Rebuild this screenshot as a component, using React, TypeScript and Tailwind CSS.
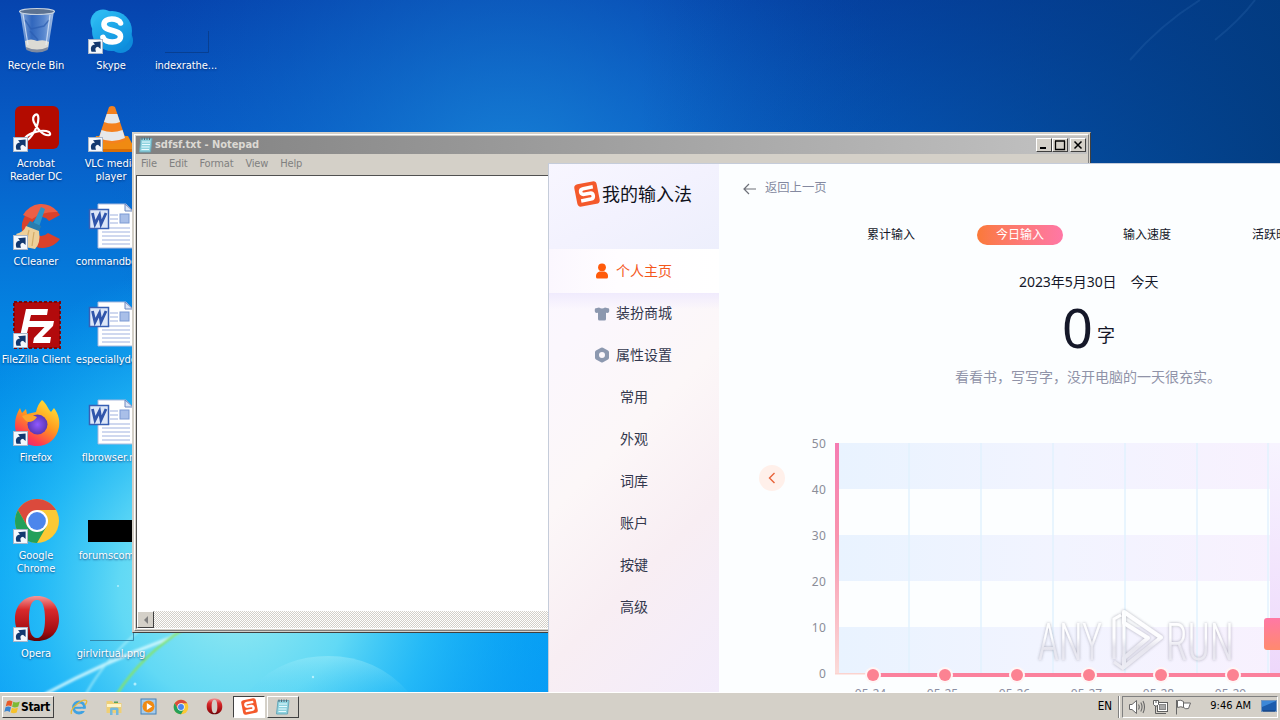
import React from "react";

type IconProps = { className?: string };

const ShortcutArrow = () => (
  <g transform="translate(0 32)">
    <rect x="0.5" y="0.5" width="14" height="14" fill="#f4f8fd" stroke="#a9b6c9" />
    <path d="M3.500 12.800C2 8.500 3.400 6 7 5.600L5 3.200 12.600 2.600 12.600 10 10 7.800C7.400 8.200 6.800 10 8 12.800Z" fill="#12386f" />
  </g>
);

const RecycleBin = () => (
  <svg width="48" height="48" viewBox="0 0 48 48">
    <defs>
      <linearGradient id="bin" x1="0" x2="1">
        <stop offset="0" stopColor="#c9dcf2" stopOpacity=".75" />
        <stop offset=".35" stopColor="#5d86c8" stopOpacity=".5" />
        <stop offset=".7" stopColor="#8fb0e0" stopOpacity=".6" />
        <stop offset="1" stopColor="#d5e4f5" stopOpacity=".8" />
      </linearGradient>
    </defs>
    <path d="M7 4 13 42Q24 48 35 42L41 4Z" fill="url(#bin)" />
    <path d="M12 34Q18 31 24 34 31 32 36 35L35 41Q24 46 13 41Z" fill="#dcdbd4" />
    <path d="M13 40Q24 45 35 40L34.500 43Q24 48 13.500 43Z" fill="#7f8ba0" />
    <path d="M12 13 18 22 31 19 36 13M17 24 25 33" stroke="#2b5cb0" strokeWidth="1.500" fill="none" opacity=".7" />
    <path d="M10 7 15 38M37 8 33 38" stroke="#eaf3ff" strokeWidth="1.200" opacity=".7" />
    <ellipse cx="24" cy="4.500" rx="17.500" ry="3" fill="#5c7291" stroke="#c6d2e0" strokeWidth="1.200" />
  </svg>
);

const Skype = () => (
  <svg width="48" height="48" viewBox="0 0 48 48">
    <defs>
      <linearGradient id="sky" x1="0" y1="0" x2=".6" y2="1">
        <stop offset="0" stopColor="#2fc0f5" />
        <stop offset="1" stopColor="#0e90de" />
      </linearGradient>
    </defs>
    <circle cx="15" cy="15" r="12.500" fill="#2cb9f1" />
    <circle cx="32.500" cy="33.500" r="12.500" fill="#0e8cdb" />
    <circle cx="24" cy="24" r="20" fill="url(#sky)" />
    <path d="M32.500 16C31 11 16 10 16 17.500 16 25 32.500 22 32.500 29.500 32.500 37 17 36.500 15 30.500" fill="none" stroke="#fff" strokeWidth="5.600" strokeLinecap="round" />
    <ShortcutArrow />
  </svg>
);

const Acrobat = () => (
  <svg width="48" height="48" viewBox="0 0 48 48">
    <rect x="2" y="1" width="44" height="43" rx="6" fill="#b30b00" />
    <path d="M22 10C26 7 27.500 16 20.500 28 15 37 9 38 12 33 17 27 30 24 36 27 40 31 33 32 27 26 21 20 18 13 22 10Z" fill="none" stroke="#fff" strokeWidth="2.200" />
    <ShortcutArrow />
  </svg>
);

const Vlc = () => (
  <svg width="48" height="48" viewBox="0 0 48 48">
    <path d="M8 31H40L48 46H2Z" fill="#f08a12" />
    <path d="M2 44H48V47H2Z" fill="#d96e05" />
    <path d="M21 2Q24 0 27 2L38 35Q24 42 10 35Z" fill="#f4811e" />
    <path d="M18.700 9H29.300L32 17Q24 20 16 17Z" fill="#e6e8ea" />
    <path d="M13.500 25Q24 29 34.500 25L37 33Q24 39 11 33Z" fill="#e6e8ea" />
    <ShortcutArrow />
  </svg>
);

const CCleaner = () => (
  <svg width="48" height="48" viewBox="0 0 48 48">
    <path d="M47 12A21 21 0 1 0 47 36L35 30A9.500 9.500 0 1 1 36 18Z" fill="#d9412b" />
    <path d="M45 9A21 21 0 0 0 10 12L19 16Q30 8 45 9Z" fill="#ec5f45" />
    <path d="M28 4 32 6 26 24 20 21Z" fill="#2f94c8" />
    <path d="M17 18 28 23 26 29 13 24Z" fill="#2a7cae" />
    <path d="M13 23 26 28Q28 40 22 46L12 44 3 31Q11 29 13 23Z" fill="#eed09a" />
    <path d="M16 27 13 40M21 29 19 43" stroke="#d3ab68" strokeWidth="1.200" />
    <ShortcutArrow />
  </svg>
);

const FileZilla = () => (
  <svg width="48" height="48" viewBox="0 0 48 48">
    <rect x="1" y="1" width="46" height="46" fill="#b20a0c" stroke="#7d0507" strokeWidth="2" strokeDasharray="3 2" />
    <path d="M13 8H35L34 14H18L16.500 20H27L26 26H15.500L12 40H6Z" fill="#fff" />
    <path d="M24 20H41L40 25 29 36H38L37 42H20L21 37 31.500 26H23Z" fill="#fff" />
    <ShortcutArrow />
  </svg>
);

const Firefox = () => (
  <svg width="48" height="48" viewBox="0 0 48 48">
    <defs>
      <linearGradient id="fox" x1=".8" y1="0" x2=".2" y2="1">
        <stop offset="0" stopColor="#ffe63a" />
        <stop offset=".45" stopColor="#ff9a1f" />
        <stop offset=".8" stopColor="#ff3d4f" />
        <stop offset="1" stopColor="#e5247f" />
      </linearGradient>
      <radialGradient id="foxCore">
        <stop offset="0" stopColor="#9059ff" />
        <stop offset="1" stopColor="#5b37b4" />
      </radialGradient>
    </defs>
    <path d="M29 1C34 5 35 10 38 13L41 9C46 16 47 22 46 28 44 40 35 47 24 47 11 47 2 38 2 26 2 19 4 14 7 9L9 14 13 10 14 15 23 13C24 8 26 4 29 1Z" fill="url(#fox)" />
    <circle cx="24.500" cy="25.500" r="10" fill="url(#foxCore)" />
    <path d="M9 17Q17 14 24 18 21 23 15 23 12 22 9 17Z" fill="#ffa52a" />
    <ShortcutArrow />
  </svg>
);

const ChromeMark = ({ size }: { size: number }) => (
  <svg width={size} height={size} viewBox="0 0 48 48">
    <circle cx="24" cy="24" r="22" fill="#fbc935" />
    <path d="M24 24 14.500 29.500 4.950 13A22 22 0 0 1 43.050 13H24Z" fill="#db4a3c" />
    <path d="M4.950 13A22 22 0 0 0 24 46L33.500 29.500 24 24 14.500 29.500Z" fill="#23a05a" />
    <circle cx="24" cy="24" r="11" fill="#fff" />
    <circle cx="24" cy="24" r="8.900" fill="#4c86ec" />
    {size > 20 && <ShortcutArrow />}
  </svg>
);

const OperaMark = ({ size }: { size: number }) => (
  <svg width={size} height={size} viewBox="0 0 48 48">
    <defs>
      <linearGradient id="opera" x1="0" y1="0" x2="0" y2="1">
        <stop offset="0" stopColor="#f3999a" />
        <stop offset=".3" stopColor="#d92a2c" />
        <stop offset=".8" stopColor="#a00c10" />
        <stop offset="1" stopColor="#5f0306" />
      </linearGradient>
    </defs>
    <path fillRule="evenodd" d="M24 1C38 1 46 11 46 24S38 46 24 46 2 37 2 24 10 1 24 1ZM24 5C18 5 16 13 16 24S18 43 24 43 32 35 32 24 30 5 24 5Z" fill="url(#opera)" />
    {size > 20 && <ShortcutArrow />}
  </svg>
);

const WordDoc = () => (
  <svg width="48" height="48" viewBox="0 0 48 48">
    <path d="M10 1H38L45 8V45H10Z" fill="#fff" stroke="#a9b9dd" />
    <path d="M37 1V8H45Z" fill="#dbe5f7" stroke="#6f88bd" />
    <path d="M22 12H30M22 16H30M22 20H30M14 25H42M14 29H42M14 33H42M14 37H42M14 41H42" stroke="#9fb2e0" strokeWidth="1.200" />
    <rect x="32" y="11" width="9" height="9" fill="#a9bfe8" stroke="#7d9ad3" />
    <rect x="1.500" y="6.500" width="19" height="19" fill="#dde7f8" stroke="#3860b4" strokeWidth="1.500" />
    <path d="M4.500 10 7 21 11.500 12 13 21 18 10" fill="none" stroke="#2f55ab" strokeWidth="2.800" />
  </svg>
);

const BlackImage = () => (
  <svg width="48" height="48" viewBox="0 0 48 48">
    <rect x="0" y="23" width="48" height="22" fill="#000" />
  </svg>
);

const EmptyImage = ({ light = false }: { light?: boolean }) => (
  <svg width="48" height="48" viewBox="0 0 48 48">
    <path d={light ? "M2 45.500H45.500V33" : "M2 45.500H45.500V24"} fill="none" stroke={light ? "#2e7797" : "#083b88"} strokeWidth="1" opacity=".8" />
  </svg>
);

type Shortcut = { icon: React.ReactNode; label: string };

const columns: Shortcut[][] = [
  [
    { icon: <RecycleBin />, label: "Recycle Bin" },
    { icon: <Acrobat />, label: "Acrobat\nReader DC" },
    { icon: <CCleaner />, label: "CCleaner" },
    { icon: <FileZilla />, label: "FileZilla Client" },
    { icon: <Firefox />, label: "Firefox" },
    { icon: <ChromeMark size={48} />, label: "Google\nChrome" },
    { icon: <OperaMark size={48} />, label: "Opera" },
  ],
  [
    { icon: <Skype />, label: "Skype" },
    { icon: <Vlc />, label: "VLC media\nplayer" },
    { icon: <WordDoc />, label: "commandbo..." },
    { icon: <WordDoc />, label: "especiallyde..." },
    { icon: <WordDoc />, label: "flbrowser.rtf" },
    { icon: <BlackImage />, label: "forumscom..." },
    { icon: <EmptyImage light />, label: "girlvirtual.png" },
  ],
  [{ icon: <EmptyImage />, label: "indexrathe..." }],
];

const Wallpaper = () => (
  <svg className="absolute inset-0" width="1280" height="720" viewBox="0 0 1280 720">
    <defs>
      <linearGradient id="base" x1="0" y1="0" x2="0" y2="1">
        <stop offset="0" stopColor="#0644ae" />
        <stop offset=".2" stopColor="#075ec8" />
        <stop offset=".45" stopColor="#0484e2" />
        <stop offset=".75" stopColor="#01a0f2" />
        <stop offset="1" stopColor="#0a9cf6" />
      </linearGradient>
      <radialGradient id="glow" gradientUnits="userSpaceOnUse" cx="235" cy="590" r="330">
        <stop offset="0" stopColor="#9aebf0" />
        <stop offset=".35" stopColor="#66dcf5" stopOpacity=".95" />
        <stop offset=".6" stopColor="#2fc4f8" stopOpacity=".7" />
        <stop offset="1" stopColor="#10a8f4" stopOpacity="0" />
      </radialGradient>
      <radialGradient id="haze" gradientUnits="userSpaceOnUse" cx="510" cy="190" r="400">
        <stop offset="0" stopColor="#1a86d8" stopOpacity=".9" />
        <stop offset="1" stopColor="#0b5cc0" stopOpacity="0" />
      </radialGradient>
      <linearGradient id="shade" x1="0" y1="0" x2="1" y2="0">
        <stop offset=".5" stopColor="#023a7c" stopOpacity="0" />
        <stop offset="1" stopColor="#023a7c" stopOpacity=".9" />
      </linearGradient>
      <linearGradient id="dome" x1="0" y1="0" x2="0" y2="1">
        <stop offset="0" stopColor="#a5eefa" stopOpacity=".45" />
        <stop offset="1" stopColor="#4fd0f6" stopOpacity=".1" />
      </linearGradient>
      <filter id="soft"><feGaussianBlur stdDeviation=".8" /></filter>
    </defs>
    <rect width="1280" height="720" fill="url(#base)" />
    <rect width="1280" height="720" fill="url(#haze)" />
    <rect width="1280" height="720" fill="url(#shade)" />
    <rect width="1280" height="720" fill="url(#glow)" />
    <path d="M246 694Q278 656 328 656 378 656 410 694Z" fill="url(#dome)" />
    <path d="M1130 60Q1160 25 1200 0M1215 40Q1240 20 1255 0" stroke="#2a66ad" strokeWidth="2" opacity=".3" fill="none" />
    <g fill="none" filter="url(#soft)">
      <path d="M45 694Q105 662 165 640 175 636 184 628" stroke="#d9faff" strokeWidth="3" opacity=".85" />
      <path d="M86 694Q106 658 140 630" stroke="#b3f2fb" strokeWidth="2" opacity=".7" />
      <path d="M117 694Q142 655 184 629" stroke="#86e46a" strokeWidth="2.200" />
    </g>
    <g fill="#c8f6ff" opacity=".8">
      <circle cx="135" cy="684" r="1.500" />
      <circle cx="118" cy="586" r="1" />
      <circle cx="313" cy="677" r="1.200" />
    </g>
  </svg>
);

const NotepadIcon = ({ className }: IconProps) => (
  <svg className={className} width="16" height="16" viewBox="0 0 16 16">
    <path d="M3 1.500H14L12.500 15H1.500Z" fill="#8fd3df" stroke="#6aa9ba" />
    <path d="M4 5H12M4 7.500H12M3.500 10H11.500M3.500 12.500H11" stroke="#e8fbff" strokeWidth="1" />
    <path d="M4 .5V3M6.500 .5V3M9 .5V3M11.500 .5V3" stroke="#556a78" />
  </svg>
);

const SogouMark = ({ size }: { size: number }) => (
  <svg width={size} height={size} viewBox="0 0 24 24">
    <g transform="rotate(-11 12 12)">
      <rect x="1.500" y="1.500" width="21" height="21" rx="3.500" fill="#f4592b" />
      <path d="M18.500 6.500H9.500Q6.600 6.500 6.600 9.100T9.500 11.800H14.600Q17.400 11.800 17.400 14.500T14.600 17.300H5.500" fill="none" stroke="#fff" strokeWidth="3.300" />
    </g>
  </svg>
);

const raised = "border border-t-white border-l-white border-r-[#404040] border-b-[#404040] bg-[#d4d0c8]";

const CaptionButton = ({ children }: { children: React.ReactNode }) => (
  <div className={`flex h-[14px] w-[16px] items-center justify-center ${raised}`}>
    <svg width="14" height="12" viewBox="0 0 14 12" fill="none" stroke="#000">
      {children}
    </svg>
  </div>
);

const Notepad = () => (
  <div className="absolute left-[132px] top-[132px] flex h-[501px] w-[959px] flex-col border border-t-[#d4d0c8] border-l-[#d4d0c8] border-r-[#404040] border-b-[#404040] bg-[#d4d0c8] p-px">
    <div className="flex flex-1 flex-col border border-t-white border-l-white border-r-[#808080] border-b-[#808080] p-px">
      <div className="flex h-[18px] shrink-0 items-center bg-linear-to-r from-[#808080] to-[#c2c2c2] pl-[2px] pr-px">
        <NotepadIcon className="mr-px" />
        <span className="text-[11px] font-bold tracking-[-0.04px] text-[#dcd9d3]">sdfsf.txt - Notepad</span>
        <div className="ml-auto flex">
          <CaptionButton><path d="M3 9H9" strokeWidth="2" /></CaptionButton>
          <CaptionButton><path d="M2.500 2V10.500H11.500V2M2 2H12" strokeWidth="1.300" /></CaptionButton>
          <div className="w-[2px]" />
          <CaptionButton><path d="M3.500 2.500 10.500 9.500M10.500 2.500 3.500 9.500" strokeWidth="1.500" /></CaptionButton>
        </div>
      </div>
      <div className="flex h-[21px] shrink-0 items-center gap-[12px] pl-[5px] text-[11px] tracking-[-0.15px] text-[#808080]">
        <span>File</span><span>Edit</span><span>Format</span><span>View</span><span>Help</span>
      </div>
      <div className="flex flex-1 flex-col border border-t-[#505050] border-l-[#505050] border-r-white border-b-white">
        <div className="flex-1 bg-white" />
        <div className="flex h-[17px] shrink-0 bg-[repeating-conic-gradient(#d4d0c8_0_25%,#fff_0_50%)] bg-[length:2px_2px]">
          <div className={`flex h-[17px] w-[17px] items-center justify-center ${raised}`}>
            <svg width="8" height="8" viewBox="0 0 8 8"><path d="M6 0V8L2 4Z" fill="#808080" /></svg>
          </div>
        </div>
      </div>
    </div>
  </div>
);

const dates = ["05-24", "05-25", "05-26", "05-27", "05-28", "05-29"];

const Chart = () => (
  <svg className="block" width="481" height="262" viewBox="799 430 481 262">
    <defs>
      <linearGradient id="band" gradientUnits="userSpaceOnUse" x1="839" x2="1280" y1="0" y2="0">
        <stop offset="0" stopColor="#e9f3ff" />
        <stop offset=".5" stopColor="#f2f4ff" />
        <stop offset="1" stopColor="#f8f1fe" />
      </linearGradient>
      <linearGradient id="axis" x1="0" y1="0" x2="0" y2="1">
        <stop offset="0" stopColor="#f57cb2" />
        <stop offset=".4" stopColor="#f993ae" />
        <stop offset="1" stopColor="#fbdcd9" />
      </linearGradient>
      <linearGradient id="today" x1="0" y1="0" x2="0" y2="1">
        <stop offset="0" stopColor="#f7f4ff" />
        <stop offset="1" stopColor="#eed8fb" />
      </linearGradient>
      <linearGradient id="tip" x1="0" y1="0" x2="0" y2="1">
        <stop offset="0" stopColor="#ff78a5" />
        <stop offset="1" stopColor="#ff8a6e" />
      </linearGradient>
    </defs>
    {[443, 535, 627].map((y) => (
      <rect key={y} x="839" y={y} width="441" height="46" fill="url(#band)" />
    ))}
    {[909, 981, 1053, 1125, 1197, 1268].map((x) => (
      <rect key={x} x={x - 1} y="443" width="2" height="230" fill="#e2f2fd" opacity=".75" />
    ))}
    <rect x="1270" y="443" width="10" height="230" fill="url(#today)" />
    <rect x="835" y="443" width="4" height="231" fill="url(#axis)" />
    <rect x="835" y="673" width="40" height="1.500" fill="#fbd3cf" />
    <rect x="873" y="673" width="407" height="4" fill="#fb819d" />
    {dates.map((d, i) => (
      <g key={d}>
        <circle cx={873 + 72 * i} cy="675" r="8" fill="#fff6f6" />
        <circle cx={873 + 72 * i} cy="675" r="6" fill="#fc8292" />
        <text x={870.500 + 72 * i} y="698" textAnchor="middle" fontSize="12" fill="#8b8fa3" fontFamily="Noto Sans">{d}</text>
      </g>
    ))}
    {[50, 40, 30, 20, 10, 0].map((n, i) => (
      <text key={n} x="826" y={448 + 46 * i} textAnchor="end" fontSize="12" letterSpacing=".2" fill="#8b8d98" fontFamily="Noto Sans">{n}</text>
    ))}
    <rect x="1264" y="618" width="24" height="32" rx="3" fill="url(#tip)" />
  </svg>
);

const PersonIcon = () => (
  <svg width="16" height="16" viewBox="0 0 16 16" fill="#ff5a0a">
    <circle cx="8" cy="4.300" r="3.900" />
    <path d="M5.500 8.500H10.500Q14 9.500 14 13V14Q14 15.500 12.500 15.500H3.500Q2 15.500 2 14V13Q2 9.500 5.500 8.500Z" />
  </svg>
);
const ShirtIcon = () => (
  <svg width="16" height="16" viewBox="0 0 16 16" fill="#8c98af">
    <path d="M5 1.500Q8 3.500 11 1.500L15 2.500Q15.800 6 14 7L12 6.800V13Q12 14.500 10.500 14.500H5.500Q4 14.500 4 13V6.800L2 7Q.2 6 1 2.500Z" />
  </svg>
);
const HexIcon = () => (
  <svg width="16" height="16" viewBox="0 0 16 16">
    <path fillRule="evenodd" d="M7 .8Q8 .2 9 .8L14 3.600Q15 4.200 15 5.200V10.800Q15 11.800 14 12.400L9 15.200Q8 15.800 7 15.200L2 12.400Q1 11.800 1 10.800V5.200Q1 4.200 2 3.600ZM8 5A3 3 0 1 0 8 11 3 3 0 1 0 8 5Z" fill="#8c98af" />
  </svg>
);

const Sidebar = () => (
  <aside className="flex w-[170px] shrink-0 flex-col bg-[linear-gradient(135deg,#faf7ff_0%,#fbf7fd_28%,#fcf7f8_50%,#f8eef3_72%,#f3ecfb_100%)] text-[14px] text-[#33374d]">
    <div className="flex h-[85px] shrink-0 items-start bg-linear-to-br from-[#f8f6ff] via-[#f3f2fe] to-[#edeffc] pl-[25px] pt-[17px]">
      <SogouMark size={26} />
      <span className="ml-[2px] text-[18px] leading-[26px] text-[#10121c]">我的输入法</span>
    </div>
    <div className="flex h-[44px] shrink-0 items-center gap-[6px] bg-linear-to-r from-[#fbf7fe] via-[#fffdff] via-40% to-white pl-[45px] text-[#f4581c]">
      <PersonIcon /><span className="-mt-[2px]">个人主页</span>
    </div>
    <div className="flex h-[41px] shrink-0 items-center gap-[6px] bg-linear-to-b from-[#f0ebfd] to-transparent to-40% pl-[45px]">
      <ShirtIcon /><span className="-mt-[2px]">装扮商城</span>
    </div>
    <div className="flex h-[42px] shrink-0 items-center gap-[6px] pl-[45px]">
      <HexIcon /><span className="-mt-[2px]">属性设置</span>
    </div>
    {["常用", "外观", "词库", "账户", "按键", "高级"].map((t) => (
      <div key={t} className="flex h-[42px] shrink-0 items-center pb-[2px] pl-[71px]">{t}</div>
    ))}
  </aside>
);

const InputMethod = () => (
  <div className="absolute left-[548px] top-[163px] flex h-[529px] w-[732px] overflow-hidden border-l border-t border-[#c5ccda] bg-[#fcfeff] font-['Noto_Sans','Noto_Sans_CJK_SC',sans-serif]">
    <Sidebar />
    <main className="flex w-[561px] shrink-0 flex-col overflow-hidden text-[#151829]">
      <div className="flex h-[48px] shrink-0 items-center gap-[7px] pl-[23px] pt-px text-[12.300px] text-[#8489a0]">
        <svg width="16" height="16" viewBox="0 0 16 16" fill="none" stroke="#6e7179" strokeWidth="1.200"><path d="M14 8H2M7 3 2 8 7 13" /></svg>
        返回上一页
      </div>
      <div className="flex h-[46px] shrink-0 items-center text-[12px]">
        <span className="ml-[148px] shrink-0">累计输入</span>
        <span className="ml-[62px] flex h-[20px] w-[86px] shrink-0 items-center justify-center rounded-full bg-linear-to-r from-[#fb7937] to-[#ff77a5] text-white">今日输入</span>
        <span className="ml-[60px] shrink-0">输入速度</span>
        <span className="ml-[81px] shrink-0">活跃时段</span>
      </div>
      <div className="flex h-[46px] shrink-0 items-center gap-[14px] pl-[300px] text-[14px]">
        <span className="tracking-[-0.05px]">2023年5月30日</span><span>今天</span>
      </div>
      <div className="flex h-[56px] shrink-0 items-baseline pl-[343px] pt-px">
        <span className="text-[54px] leading-[44px]">0</span>
        <span className="relative -top-[6px] ml-[4px] text-[18px] leading-[18px]">字</span>
      </div>
      <div className="flex h-[32px] shrink-0 items-center pl-[236px] text-[14px] text-[#9093a8]">看看书，写写字，没开电脑的一天很充实。</div>
      <div className="mt-[38px] flex">
        <div className="flex w-[80px] shrink-0 justify-end pr-[14px] pt-[35px]">
          <div className="flex h-[26px] w-[26px] items-center justify-center rounded-full bg-[#fff0ea]">
            <svg width="12" height="12" viewBox="0 0 12 12" fill="none" stroke="#e8643a" strokeWidth="1.400"><path d="M8.500 1 3.500 6 8.500 11" /></svg>
          </div>
        </div>
        <Chart />
      </div>
    </main>
  </div>
);

const Watermark = () => (
  <svg className="absolute left-[1030px] top-[602px]" width="212" height="76" viewBox="0 0 212 76">
    <defs>
      <filter id="wm" x="-10%" y="-10%" width="120%" height="120%">
        <feDropShadow dx="0" dy="0" stdDeviation="1.500" floodColor="#777788" floodOpacity=".7" />
      </filter>
      <linearGradient id="wmf" gradientUnits="userSpaceOnUse" x1="0" y1="8" x2="0" y2="70">
        <stop offset=".45" stopColor="#ffffff" />
        <stop offset=".6" stopColor="#e4e3ec" />
        <stop offset="1" stopColor="#eeedf4" />
      </linearGradient>
    </defs>
    <g filter="url(#wm)" opacity=".85">
      <g fill="url(#wmf)" fontFamily="Roboto, Liberation Sans, sans-serif" fontSize="51" fontWeight="300">
        <text x="8" y="58" textLength="64" lengthAdjust="spacingAndGlyphs">ANY</text>
        <text x="136" y="58" textLength="68" lengthAdjust="spacingAndGlyphs">RUN</text>
      </g>
      <g fill="none" stroke="url(#wmf)" strokeWidth="4" strokeLinejoin="round">
        <path d="M94 10 131 35.500 94 65V56L118 36 94 21Z" />
        <path d="M84 57V17L91 13M84 60 94 67M94 21V56" strokeWidth="3" />
      </g>
    </g>
  </svg>
);

const WindowsFlag = () => (
  <svg width="17" height="16" viewBox="0 0 16 16">
    <path d="M2.500 2.500Q5 .5 8 2.500L6.800 7.500Q4 5.500 1.200 7.500Z" fill="#e85a28" />
    <path d="M8.800 2.800Q11.500 4.500 15.300 2.500L13.800 7.600Q10.500 9.300 7.600 7.800Z" fill="#7dba36" />
    <path d="M1 8.300Q3.800 6.500 6.500 8.300L5.300 13Q2.500 11.200 -.2 13Z" fill="#3b85d0" />
    <path d="M7.400 8.700Q10 10.300 13.500 8.400L12.200 13.500Q9 15 6.200 13.400Z" fill="#f6c22c" />
  </svg>
);

const IeIcon = () => (
  <svg width="18" height="18" viewBox="0 0 18 18" fill="none">
    <circle cx="9" cy="9.500" r="5.500" stroke="#3fa2e2" strokeWidth="2.800" />
    <path d="M4 9.800H14" stroke="#3fa2e2" strokeWidth="2" />
    <path d="M11 10.800H16V13H11Z" fill="#d4d0c8" />
    <path d="M1.500 16Q0 12 6.500 6.500 13 1 16.500 2.500 17.500 4 15 7" stroke="#e6b93a" strokeWidth="1.300" />
  </svg>
);
const FolderIcon = () => (
  <svg width="18" height="18" viewBox="0 0 18 18">
    <path d="M1.500 3H7L8.500 5H16.500V15H1.500Z" fill="#efcf74" />
    <path d="M2 6H16V9H2Z" fill="#fff4c6" />
    <path d="M5 17V11Q5 9.500 6.500 9.500H12Q13.500 9.500 13.500 11V17H11V12H7.500V17Z" fill="#74b8dc" />
    <path d="M9 3.500H13V5H9Z" fill="#58a45c" />
  </svg>
);
const PlayerIcon = () => (
  <svg width="17" height="17" viewBox="0 0 17 17">
    <rect x="1" y="1" width="15" height="15" fill="#a7cbea" stroke="#4380b7" />
    <circle cx="8.500" cy="8.500" r="6" fill="#f08a13" />
    <path d="M6.800 5 12.200 8.500 6.800 12Z" fill="#fff" />
  </svg>
);

const VolumeIcon = () => (
  <svg width="18" height="16" viewBox="0 0 18 16" fill="#fff" stroke="#686868">
    <path d="M1.500 5.500H4L8.500 1.500V14.500L4 10.500H1.500Z" />
    <path d="M10.500 5.500Q12 8 10.500 10.500M12.800 3.500Q15.300 8 12.800 12.500M15 2Q18 8 15 14" fill="none" strokeWidth="1.100" />
  </svg>
);
const NetworkIcon = () => (
  <svg width="17" height="16" viewBox="0 0 17 16" fill="#fff" stroke="#606060">
    <rect x="5.500" y="3.500" width="10" height="9" fill="#fff" />
    <rect x="7.500" y="5.500" width="6" height="5" fill="#a8a8a8" stroke="#888" />
    <path d="M8 14.500H14" />
    <path d="M3.500 6.500V14.500H8" fill="none" />
    <path d="M1.500 1.500H6.500V5.500L5 7H3L1.500 5.500ZM4 1V4" />
  </svg>
);
const FlagIcon = () => (
  <svg width="17" height="16" viewBox="0 0 17 16" fill="#fff" stroke="#686868">
    <path d="M1.500 1V15.500M2.500 1.500Q6 .5 8.500 2.500V8.500Q6 7 2.500 8.500ZM8.500 4H15.500L13.500 9.500Q10.500 10.500 8.500 8.500" />
  </svg>
);
const DesktopIcon = () => (
  <svg width="16" height="13" viewBox="0 0 16 13">
    <rect x=".5" y=".5" width="15" height="11" fill="#1c5cad" stroke="#7395bd" />
    <path d="M1 1H15L1 7Z" fill="#3d88d8" />
    <path d="M2 11H14" stroke="#153a72" />
  </svg>
);

const Taskbar = () => (
  <footer className="flex h-[28px] shrink-0 items-center border-t border-white bg-[#d4d0c8] pl-[2px] pr-[2px] text-[11px] text-black shadow-[0_-1px_0_#d4d0c8]">
    <div className={`flex h-[22px] w-[52px] items-center pl-px text-[12px] font-bold tracking-[-0.4px] ${raised}`}>
      <WindowsFlag />Start
    </div>
    <div className="ml-[16px] flex w-[153px] shrink-0 items-center justify-between">
      <IeIcon /><FolderIcon /><PlayerIcon /><ChromeMark size={16} /><OperaMark size={17} />
    </div>
    <div className="ml-[10px] flex h-[22px] w-[32px] items-center justify-center border border-t-[#404040] border-l-[#404040] border-r-white border-b-white bg-white"><SogouMark size={17} /></div>
    <div className={`ml-[2px] flex h-[22px] w-[32px] items-center justify-center ${raised}`}><NotepadIcon /></div>
    <span className="ml-auto mr-[6px] text-[11.500px]">EN</span>
    <div className="mr-[2px] h-[22px] w-[2px] border-l border-[#808080] bg-white" />
    <div className="flex h-[22px] w-[156px] items-center border border-t-[#808080] border-l-[#808080] border-r-white border-b-white pl-[5px]">
      <VolumeIcon />
      <span className="ml-[6px] flex"><NetworkIcon /></span>
      <span className="ml-[6px] flex"><FlagIcon /></span>
      <span className="ml-auto whitespace-nowrap">9:46 AM</span>
      <span className="ml-[10px] flex"><DesktopIcon /></span>
    </div>
  </footer>
);

export default function App() {
  return (
    <div className="flex h-[720px] w-[1280px] flex-col overflow-hidden font-['DejaVu_Sans_Condensed','DejaVu_Sans',sans-serif] font-stretch-condensed">
      <div className="relative h-[692px] shrink-0 overflow-hidden">
        <Wallpaper />
        <div className="relative flex gap-px pt-[7px]">
          {columns.map((items, c) => (
            <div key={c} className="flex w-[74px] flex-col">
              {items.map((item) => (
                <div key={item.label} className="flex h-[98px] flex-col items-center">
                  {item.icon}
                  <span className="mr-[2px] mt-[4px] whitespace-pre text-center text-[11px] leading-[13px] tracking-[-0.05px] text-white [text-shadow:0_1px_2px_rgba(0,30,90,0.7)]">{item.label}</span>
                </div>
              ))}
            </div>
          ))}
        </div>
        <Notepad />
        <InputMethod />
        <Watermark />
      </div>
      <Taskbar />
    </div>
  );
}
